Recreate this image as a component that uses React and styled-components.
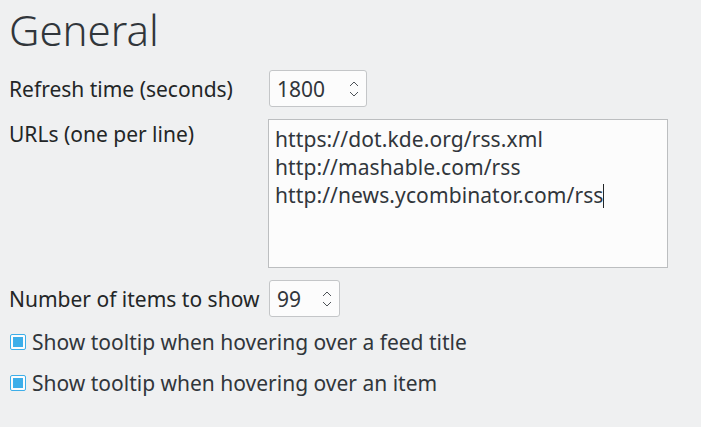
import React from "react";
import styled, { createGlobalStyle } from "styled-components";

const GlobalStyle = createGlobalStyle`
  html, body {
    margin: 0;
    padding: 0;
    background: #eff0f1;
  }
  body {
    font-family: "Noto Sans", "Open Sans", sans-serif;
    color: #232627;
  }
`;

const Page = styled.div`
  width: 701px;
  height: 427px;
  box-sizing: border-box;
  padding: 2px 0 0 9px;
  overflow: hidden;
`;

const Title = styled.h1`
  margin: 0;
  font-size: 42px;
  font-weight: 300;
  line-height: 56px;
  color: #31363b;
`;

const Form = styled.div`
  display: grid;
  grid-template-columns: 250px 400px;
  column-gap: 9px;
  row-gap: 12px;
  margin-top: 12px;
  align-items: center;
`;

const Label = styled.div`
  font-size: 21px;
  line-height: 28px;
  white-space: nowrap;
  align-self: ${(p) => (p.top ? "start" : "center")};
  padding-top: ${(p) => (p.top ? "1px" : "0")};
`;

const SpinBox = styled.div`
  display: flex;
  align-items: center;
  justify-content: space-between;
  width: ${(p) => p.width}px;
  height: 37px;
  box-sizing: border-box;
  margin-left: 1px;
  padding: 0 6px 0 7px;
  border: 1px solid #c4c6c8;
  border-radius: 3px;
  background: #fcfcfc;
  font-size: 21px;
  color: #31363b;
`;

const Arrows = styled.svg`
  width: 12px;
  height: 18px;
  flex: none;
`;

const TextBox = styled.div`
  height: 149px;
  box-sizing: border-box;
  padding: 5px 6px;
  border: 1px solid #bcbec0;
  background: #fcfcfc;
  font-size: 21px;
  line-height: 28px;
  letter-spacing: 0.1px;
  color: #31363b;
`;

const Caret = styled.span`
  display: inline-block;
  width: 1px;
  height: 24px;
  background: #232627;
  vertical-align: -5px;
`;

const Checks = styled.div`
  display: flex;
  flex-direction: column;
  gap: 13px;
  margin-top: 11px;
  padding-left: 1px;
`;

const CheckRow = styled.label`
  display: flex;
  align-items: center;
  gap: 6px;
  font-size: 21px;
  line-height: 28px;
  color: #31363b;
`;

const Box = styled.span`
  width: 16px;
  height: 16px;
  box-sizing: border-box;
  border: 1px solid #3daee9;
  border-radius: 2px;
  background: #fcfcfc;
  padding: 2px;
  display: flex;
  &::after {
    content: "";
    flex: 1;
    background: #3daee9;
  }
`;

const Chevrons = () => (
  <Arrows viewBox="0 0 12 18">
    <path d="M2 6 L6 2 L10 6" fill="none" stroke="#4d5257" strokeWidth="1" />
    <path d="M2 12 L6 16 L10 12" fill="none" stroke="#4d5257" strokeWidth="1" />
  </Arrows>
);

const urls = [
  "https://dot.kde.org/rss.xml",
  "http://mashable.com/rss",
  "http://news.ycombinator.com/rss",
];

export default function App() {
  return (
    <Page>
      <GlobalStyle />
      <Title>General</Title>
      <Form>
        <Label>Refresh time (seconds)</Label>
        <div>
          <SpinBox width={98}>
            1800
            <Chevrons />
          </SpinBox>
        </div>
        <Label top>URLs (one per line)</Label>
        <TextBox>
          {urls.map((u, i) => (
            <div key={i}>
              {u}
              {i === urls.length - 1 && <Caret />}
            </div>
          ))}
        </TextBox>
        <Label>Number of items to show</Label>
        <div>
          <SpinBox width={71}>
            99
            <Chevrons />
          </SpinBox>
        </div>
      </Form>
      <Checks>
        <CheckRow>
          <Box />
          Show tooltip when hovering over a feed title
        </CheckRow>
        <CheckRow>
          <Box />
          Show tooltip when hovering over an item
        </CheckRow>
      </Checks>
    </Page>
  );
}
